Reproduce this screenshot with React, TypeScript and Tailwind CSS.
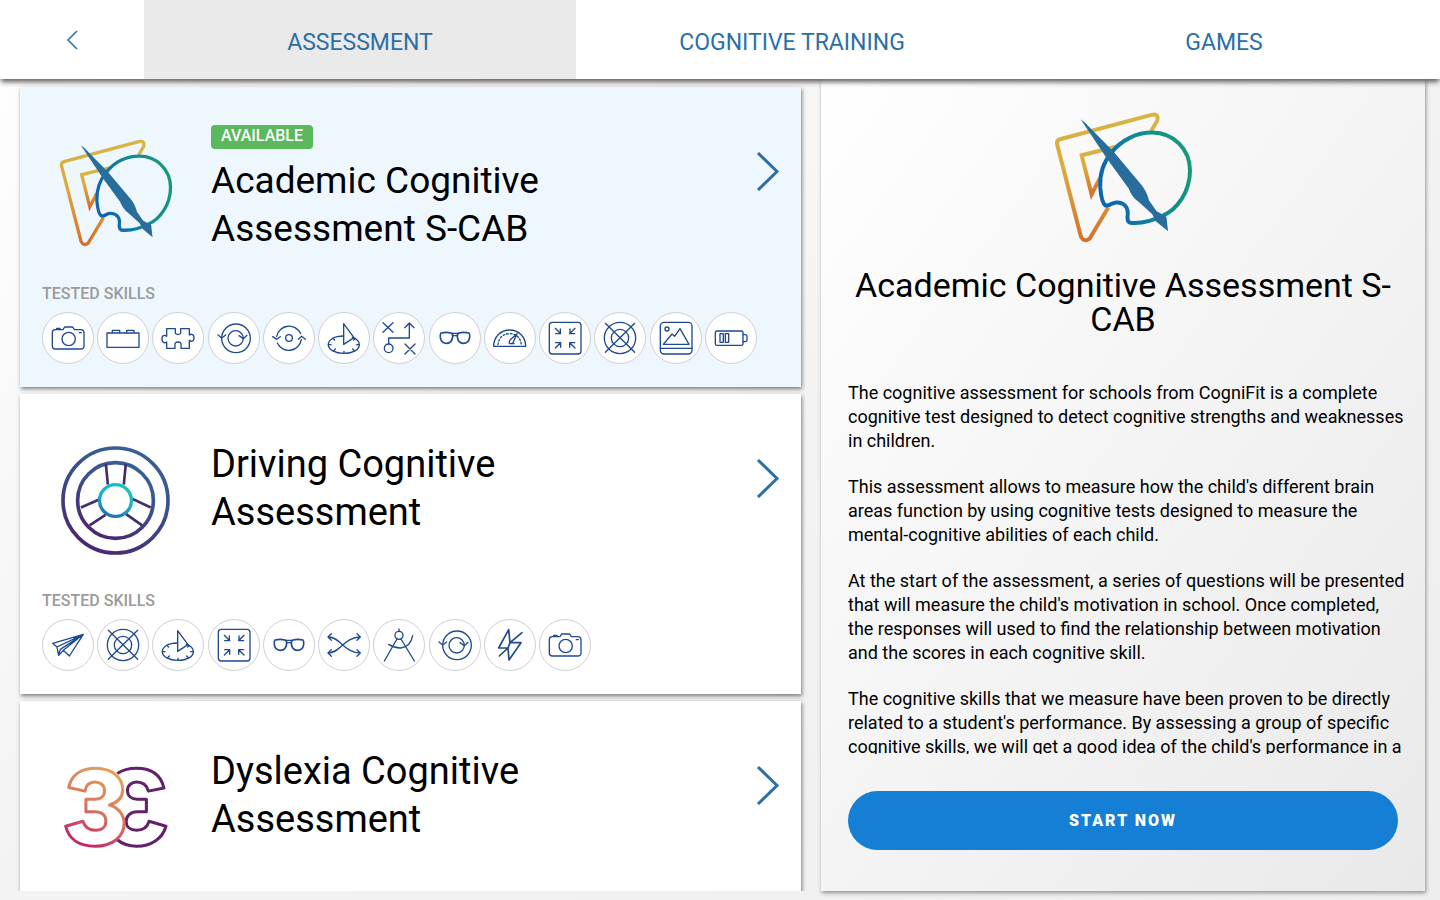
import { useState } from 'react';
import type { ReactNode } from 'react';

type SkillName =
  | 'camera'
  | 'brick'
  | 'puzzle'
  | 'refresh'
  | 'rotate'
  | 'sundial'
  | 'strategy'
  | 'glasses'
  | 'gauge'
  | 'compress'
  | 'target'
  | 'image'
  | 'battery'
  | 'plane'
  | 'shuffle'
  | 'compass'
  | 'bolt';

interface Assessment {
  id: string;
  title: string;
  available: boolean;
  logo: ReactNode;
  skills: SkillName[];
}

const TABS = ['Assessment', 'Cognitive Training', 'Games'];

const skillIcons: Record<SkillName, ReactNode> = {
  camera: (
    <>
      <path d="M-39-25h24l5-8H14l5 8H38q10 0 10 10V24q0 9-10 9H-38q-9 0-9-9V-15q0-10 8-10M-34-25v-4h10v4M34-16h6" />
      <circle cx="2" cy="3" r="20" />
    </>
  ),
  brick: <path d="M-48-15H48V28H-48zM-32-15v-8h22v8M11-15v-8h22v8" />,
  puzzle: (
    <path d="M-34-28H-8v8q-2 9 8 9t8-9v-8H34v19q4-3 8-2 6 2 6 11t-7 10q-4 0-7-3V31H9v-8q2-11-9-11t-9 11v8H-34V12q-4 3-8 2-6-2-6-12t7-10q4 0 7 3z" />
  ),
  refresh: (
    <>
      <circle cx="6" cy="1" r="43" />
      <path d="M-48-9l11 9 12-9" />
      <circle cx="5" cy="1" r="23" />
      <path d="M15-7l13 9 11-10" />
    </>
  ),
  rotate: (
    <>
      <circle r="10" />
      <path d="M-37-5A38 38 0 0 1 35-13M37 5A38 38 0 0 1-35 15M-49-4l12 8 11-8M28 4l10-9 11 9" />
    </>
  ),
  sundial: (
    <>
      <path d="M-1-43L30-1-1 19z" />
      <path d="M-1-6C-30-6-47 5-47 20S-27 46 0 46 46 35 46 20C46 10 40 3 25-2" />
      <path d="M-47 20h8M46 20h-8M0 46v-6M-31 38l5-5M31 38l-5-5M-34 1l6 5M35 1l-6 5" />
    </>
  ),
  strategy: (
    <>
      <path d="M-48-46l30 29M-18-46l-30 29M18 18l30 30M48 18L18 48M-31 18V0H31V-43M17-31l14-14 14 14" />
      <circle cx="-31" cy="31" r="13" />
    </>
  ),
  glasses: (
    <>
      <path d="M-42-15q16-4 30 0 6 2 5 11-2 20-18 20-16 0-19-17-1-11 2-14zM42-15q-16-4-30 0-6 2-5 11 2 20 18 20 16 0 19-17 1-11-2-14z" strokeWidth="5" />
      <path d="M-10-14H10M-7-7H7" />
    </>
  ),
  gauge: (
    <>
      <path d="M-49 25C-49-5-27-24-1-24S47-5 47 25z" />
      <path d="M-36 20C-34-1-20-13-1-13S32-1 34 20" strokeDasharray="5 6" />
      <path d="M21-13L1 5q-7 10 0 12 8 0 10-7zM-2 17h14" />
    </>
  ),
  compress: (
    <>
      <rect x="-47" y="-47" width="95" height="95" rx="9" />
      <path d="M-29-29l16 16M-14-27v14h-14M30-29L14-13M15-27v14h14M-29 30l16-16M-28 14h15v14M30 30L14 14M29 14H14v14" />
    </>
  ),
  target: (
    <>
      <circle r="47" />
      <circle r="26" />
      <path d="M-44-44L44 43M44-44l-88 87" />
    </>
  ),
  image: (
    <>
      <rect x="-47" y="-47" width="95" height="95" rx="11" />
      <circle cx="-27" cy="-27" r="6" />
      <path d="M-47 31h95M-38 19l26-31 8 7L12-28 39 19z" />
    </>
  ),
  battery: (
    <>
      <rect x="-47" y="-21" width="83" height="43" rx="5" />
      <path d="M36-10h7q5 0 5 5V6q0 5-5 5h-7M-33-13h10v26h-10zM-17-13h10v26h-10z" />
    </>
  ),
  plane: <path d="M46-32L-46-5-33 6-28 31-14 16 4 33zM46-32L-33 6M46-32l-69 45-5 18M46-32l-60 48" />,
  shuffle: (
    <path d="M-47-24C-10-24 0 24 49 24M-47 24C-10 24 0-24 49-24M-38-34l-10 10 10 10M-38 14l-10 10 10 10M39-34l10 10-10 10M39 14l10 10-10 10" />
  ),
  compass: (
    <>
      <circle cx="0" cy="-29" r="12" />
      <path d="M0-48v7M-6-18l-38 66M6-18l40 66M-31-2Q-12 10 6 9 35 5 41-28" />
    </>
  ),
  bolt: <path d="M-4-46L-34 9H-6L-3 45 33-7H0zM36-37L0-7-6 9-32 33" strokeWidth="5" />,
};

function SkillBadge({ name }: { name: SkillName }) {
  return (
    <li className="h-13 w-13 rounded-full border border-[#d0d0d4] bg-white">
      <svg
        viewBox="-75 -75 150 150"
        className="h-full w-full"
        fill="none"
        stroke="#1f4a90"
        strokeWidth="4"
        strokeLinejoin="round"
        strokeLinecap="round"
        aria-hidden="true"
      >
        {skillIcons[name]}
      </svg>
    </li>
  );
}

function AcademicLogo({ id, className }: { id: string; className: string }) {
  return (
    <svg viewBox="70 35 418 394" className={className} fill="none" strokeLinejoin="round" aria-hidden="true">
      <defs>
        <linearGradient id={`${id}-frame`} x1="0" y1="0" x2="0" y2="1">
          <stop offset="0" stopColor="#d8b544" />
          <stop offset="0.45" stopColor="#dda93a" />
          <stop offset="1" stopColor="#d5722b" />
        </linearGradient>
        <linearGradient id={`${id}-palette`} x1="0" y1="0.6" x2="1" y2="0.3">
          <stop offset="0.1" stopColor="#0d66b0" />
          <stop offset="0.5" stopColor="#118896" />
          <stop offset="1" stopColor="#159a78" />
        </linearGradient>
      </defs>
      <g stroke={`url(#${id}-frame)`} strokeWidth="12">
        <path d="M362 92L380 62Q386 40 366 43L88 117Q76 121 80 135L151 410Q160 428 177 416L233 322" />
        <path d="M262 138L153 165 183 283 208 234" strokeLinejoin="miter" />
      </g>
      <path
        d="M291 350C296 322 281 306 257 307C240 308 239 319 225 316C215 310 211 285 209 262C207 225 218 187 243 157C273 119 318 97 365 97C430 97 479 148 479 211C479 276 439 330 396 347C365 363 333 371 299 368C290 365 291 358 291 350Z"
        stroke={`url(#${id}-palette)`}
        strokeWidth="12"
      />
      <path
        d="M150 57L161 65 248 153 332 253Q348 272 356 301L378 333 408 350 413 394 377 364 365 342 325 306Q304 291 294 264L229 175Z"
        fill="#286d9b"
      />
    </svg>
  );
}

function DrivingLogo() {
  return (
    <svg viewBox="62 47 328 328" className="h-[109px] w-[109px]" fill="none" aria-hidden="true">
      <defs>
        <linearGradient id="wheel-rim" x1="0.8" y1="0" x2="0.3" y2="1">
          <stop offset="0" stopColor="#35649a" />
          <stop offset="0.5" stopColor="#3b4c88" />
          <stop offset="1" stopColor="#4b2670" />
        </linearGradient>
        <linearGradient id="wheel-hub" x1="0.7" y1="0" x2="0.3" y2="1">
          <stop offset="0" stopColor="#14c4c8" />
          <stop offset="0.5" stopColor="#1ab0c5" />
          <stop offset="1" stopColor="#2272ad" />
        </linearGradient>
      </defs>
      <g stroke="url(#wheel-rim)" strokeWidth="11">
        <circle cx="226" cy="211" r="158" />
        <circle cx="226" cy="211" r="114" />
      </g>
      <path
        d="M197 101L203 163M257 101L251 163M122 232L177 208M148 286L196 254M332 232L277 206M306 286L258 252"
        stroke="#412d70"
        strokeWidth="8"
      />
      <circle cx="226" cy="211" r="48" stroke="url(#wheel-hub)" strokeWidth="10" />
    </svg>
  );
}

function DyslexiaLogo() {
  return (
    <svg viewBox="68 80 308 242" className="h-[82px] w-26" fill="none" strokeWidth="9" strokeLinejoin="round" aria-hidden="true">
      <defs>
        <linearGradient id="dyslexia-front" x1="0.7" y1="0" x2="0.3" y2="1">
          <stop offset="0" stopColor="#e3a256" />
          <stop offset="0.5" stopColor="#d9765f" />
          <stop offset="1" stopColor="#c0236b" />
        </linearGradient>
      </defs>
      <path
        d="M226 102C245 88 265 86 283 86C325 86 355 105 364 145L318 154C313 135 300 127 283 127C268 127 256 138 256 152C256 168 268 178 285 178H312V215H285C265 215 252 228 252 243C252 260 265 270 283 270C300 270 315 262 320 243L370 258C360 295 325 317 283 317C262 317 240 310 226 298"
        stroke="#63216a"
      />
      <path
        d="M82 143C90 105 120 86 162 86C212 86 242 115 242 150C242 175 225 188 203 195C230 203 246 225 246 250C246 290 210 317 160 317C113 317 82 296 73 258L124 243C130 262 145 270 162 270C180 270 192 260 192 243C192 225 180 215 160 215H133V178H160C178 178 188 168 188 152C188 136 175 127 160 127C145 127 133 136 130 154Z"
        stroke="url(#dyslexia-front)"
      />
    </svg>
  );
}

const assessments: Assessment[] = [
  {
    id: 'academic',
    title: 'Academic Cognitive Assessment S-CAB',
    available: true,
    logo: <AcademicLogo id="card" className="h-27 w-[114px]" />,
    skills: [
      'camera', 'brick', 'puzzle', 'refresh', 'rotate', 'sundial', 'strategy',
      'glasses', 'gauge', 'compress', 'target', 'image', 'battery',
    ],
  },
  {
    id: 'driving',
    title: 'Driving Cognitive Assessment',
    available: false,
    logo: <DrivingLogo />,
    skills: [
      'plane', 'target', 'sundial', 'compress', 'glasses', 'shuffle', 'compass',
      'refresh', 'bolt', 'camera',
    ],
  },
  {
    id: 'dyslexia',
    title: 'Dyslexia Cognitive Assessment',
    available: false,
    logo: <DyslexiaLogo />,
    skills: [],
  },
];

const description = [
  'The cognitive assessment for schools from CogniFit is a complete cognitive test designed to detect cognitive strengths and weaknesses in children.',
  "This assessment allows to measure how the child's different brain areas function by using cognitive tests designed to measure the mental-cognitive abilities of each child.",
  "At the start of the assessment, a series of questions will be presented that will measure the child's motivation in school. Once completed, the responses will used to find the relationship between motivation and the scores in each cognitive skill.",
  "The cognitive skills that we measure have been proven to be directly related to a student's performance. By assessing a group of specific cognitive skills, we will get a good idea of the child's performance in a",
];

function AssessmentCard({ item, selected, onSelect }: { item: Assessment; selected: boolean; onSelect: () => void }) {
  return (
    <article
      className={`shrink-0 shadow-[1px_2px_4px_rgba(0,0,0,0.5)] ${selected ? 'bg-[#eef7fe]' : 'bg-white'}`}
    >
      <div className="flex min-h-[194px] items-start">
        <div className="mt-13 flex h-27 w-[191px] shrink-0 items-center justify-center">{item.logo}</div>
        <div className={`flex-1 ${item.available ? 'pt-[38px] text-[37px]' : 'pt-[46px] text-[38px]'}`}>
          {item.available && (
            <span className="mb-2 block h-6 w-fit rounded-sm bg-[#5cb85c] px-2.5 text-base leading-[22px] font-medium text-white">
              AVAILABLE
            </span>
          )}
          <h2 className="max-w-[400px] leading-12 text-black">{item.title}</h2>
        </div>
        <button type="button" aria-label={`Open ${item.title}`} onClick={onSelect} className="mt-16 mr-[21px] cursor-pointer">
          <svg viewBox="0 0 24 40" className="h-10 w-6" fill="none" stroke="#2a70a6" strokeWidth="3" aria-hidden="true">
            <path d="M2 2l19 18.500L2 39" />
          </svg>
        </button>
      </div>
      {item.skills.length > 0 && (
        <div className="pr-[41px] pb-[23px] pl-[22px]">
          <h3 className="mb-[5px] text-base leading-[26px] font-medium text-[#9b9b9b]">TESTED SKILLS</h3>
          <ul className="grid grid-cols-13">
            {item.skills.map((skill) => (
              <SkillBadge key={skill} name={skill} />
            ))}
          </ul>
        </div>
      )}
    </article>
  );
}

export default function App() {
  const [activeTab, setActiveTab] = useState(TABS[0]);
  const [selectedId, setSelectedId] = useState('academic');

  return (
    <div className="flex h-screen flex-col overflow-hidden bg-linear-to-br from-white via-[#f4f3f3] to-[#eeeeee] font-['Roboto','Liberation_Sans',sans-serif] text-black">
      <header className="relative z-10 flex h-[79px] shrink-0 bg-white shadow-[0_4px_5px_-1px_rgba(50,40,40,0.75)]">
        <button type="button" aria-label="Back" className="flex w-1/10 cursor-pointer items-center justify-center">
          <svg viewBox="0 0 12 20" className="h-5 w-3" fill="none" stroke="#2a70a6" strokeWidth="1.500" aria-hidden="true">
            <path d="M11 1L2 10l9 9" />
          </svg>
        </button>
        <nav className="flex flex-1">
          {TABS.map((tab) => (
            <button
              key={tab}
              type="button"
              onClick={() => setActiveTab(tab)}
              className={`flex-1 cursor-pointer pt-[7px] text-[23px] text-[#2a70a6] uppercase ${
                activeTab === tab ? 'bg-[#eaeaea]' : 'bg-white'
              }`}
            >
              {tab}
            </button>
          ))}
        </nav>
      </header>

      <main className="grid min-h-0 flex-1 grid-cols-[781fr_604fr] grid-rows-[minmax(0,1fr)] gap-5 pr-[15px] pb-[9px] pl-5">
        {/* stretched over the gutter so the card shadows are not clipped */}
        <section className="-mr-5 -ml-5 flex min-h-0 flex-col gap-[7px] overflow-hidden px-5 pt-2">
          {assessments.map((item) => (
            <AssessmentCard
              key={item.id}
              item={item}
              selected={item.id === selectedId}
              onSelect={() => setSelectedId(item.id)}
            />
          ))}
        </section>

        <aside className="flex min-h-0 min-w-0 flex-col bg-linear-to-br from-white to-[#e9e9e9] px-[27px] pt-[33px] pb-[41px] shadow-[1px_2px_4px_rgba(0,0,0,0.4)]">
          <AcademicLogo id="detail" className="h-[131px] w-[139px] shrink-0 self-center" />
          <h1 className="mt-[25px] text-center text-[34px] leading-[34px]">Academic Cognitive Assessment S-CAB</h1>
          <div className="mt-[45px] -mr-2 flex min-h-0 flex-1 flex-col gap-[22px] overflow-y-auto text-lg leading-6 [scrollbar-width:none]">
            {description.map((paragraph) => (
              <p key={paragraph}>{paragraph}</p>
            ))}
          </div>
          <button
            type="button"
            className="mt-[37px] h-[59px] shrink-0 cursor-pointer rounded-full bg-[#157fd6] text-base font-black tracking-[2px] text-white"
          >
            START NOW
          </button>
        </aside>
      </main>
    </div>
  );
}
